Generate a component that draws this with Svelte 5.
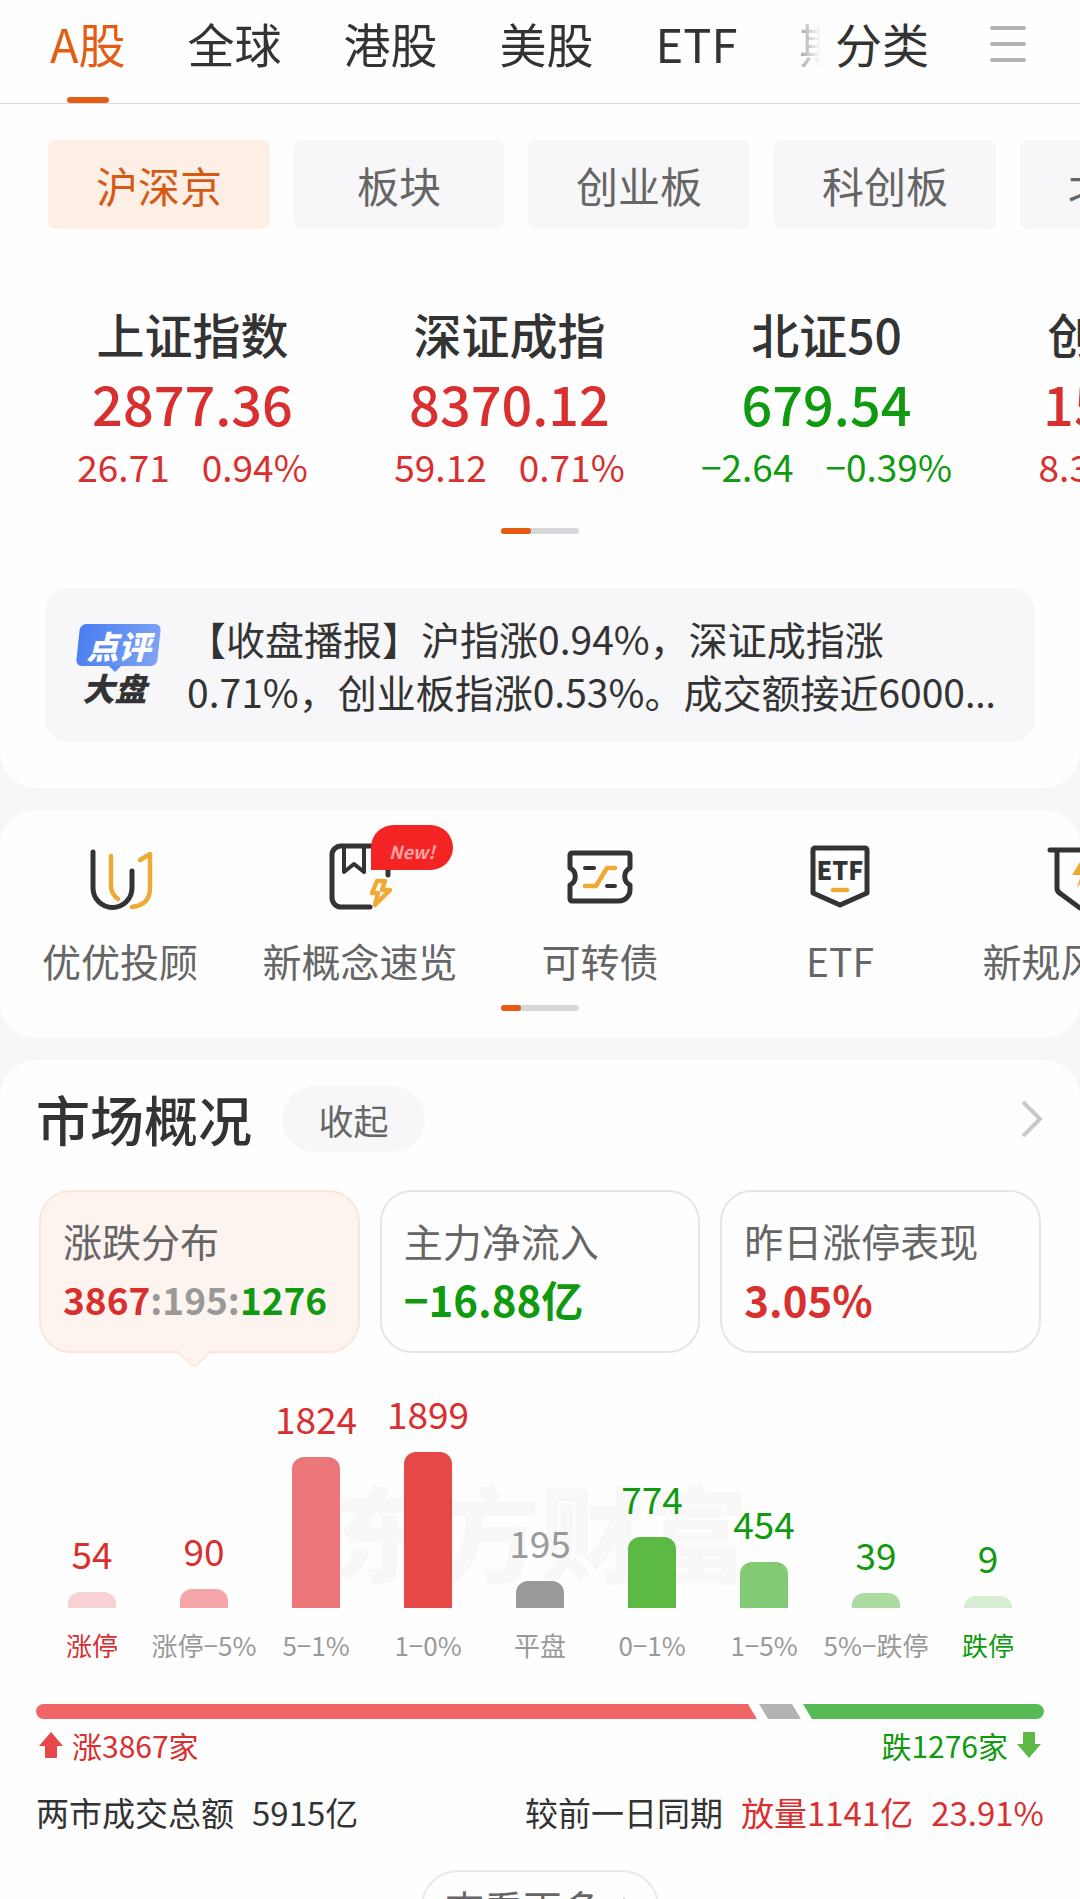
<script>
	const tabs = ['A股', '全球', '港股', '美股', 'ETF', '期货'];
	const boards = ['沪深京', '板块', '创业板', '科创板', '北交所'];

	const indices = [
		{ name: '上证指数', value: '2877.36', change: '26.71', percent: '0.94%', dir: 'up' },
		{ name: '深证成指', value: '8370.12', change: '59.12', percent: '0.71%', dir: 'up' },
		{ name: '北证50', value: '679.54', change: '−2.64', percent: '−0.39%', dir: 'down' },
		{ name: '创业板指', value: '1576.82', change: '8.32', percent: '0.53%', dir: 'up' }
	];

	const shortcuts = [
		{ icon: 'advisor', label: '优优投顾' },
		{ icon: 'concept', label: '新概念速览', badge: 'New!' },
		{ icon: 'bond', label: '可转债' },
		{ icon: 'etf', label: 'ETF' },
		{ icon: 'risk', label: '新规风险股' }
	];

	// height is the drawn bar height in px
	const bars = [
		{ label: '涨停', count: 54, height: 16, color: '#f9d1d3', tone: 'up', strong: true },
		{ label: '涨停−5%', count: 90, height: 19, color: '#f4a5a7', tone: 'up' },
		{ label: '5−1%', count: 1824, height: 151, color: '#ec7779', tone: 'up' },
		{ label: '1−0%', count: 1899, height: 156, color: '#e64747', tone: 'up' },
		{ label: '平盘', count: 195, height: 27, color: '#999999', tone: 'flat' },
		{ label: '0−1%', count: 774, height: 71, color: '#5cb944', tone: 'down' },
		{ label: '1−5%', count: 454, height: 46, color: '#82cb74', tone: 'down' },
		{ label: '5%−跌停', count: 39, height: 15, color: '#addca2', tone: 'down' },
		{ label: '跌停', count: 9, height: 12, color: '#d6eed1', tone: 'down', strong: true }
	];

	let activeTab = $state(0);
	let activeBoard = $state(0);
	let activeCard = $state(0);
</script>

<div class="app">
	<section class="panel top">
		<header>
			<nav class="tabs">
				{#each tabs as tab, i (tab)}
					<button class:active={i === activeTab} onclick={() => (activeTab = i)}>{tab}</button>
				{/each}
			</nav>
			<button class="sort">分类</button>
			<button class="menu" aria-label="菜单">
				<svg width="36" height="36" viewBox="0 0 36 36">
					<path d="M2 2h32M2 18h32M2 34h32" stroke="#b3b3b3" stroke-width="4" stroke-linecap="round" />
				</svg>
			</button>
		</header>

		<div class="boards">
			{#each boards as board, i (board)}
				<button class:active={i === activeBoard} onclick={() => (activeBoard = i)}>{board}</button>
			{/each}
		</div>

		<div class="indices">
			{#each indices as item (item.name)}
				<article class={item.dir}>
					<h3>{item.name}</h3>
					<strong>{item.value}</strong>
					<p><span>{item.change}</span><span>{item.percent}</span></p>
				</article>
			{/each}
		</div>
		<div class="pager"><i class="wide"></i></div>

		<a class="news" href="#news">
			<span class="logo">
				<b class="bubble">点评</b>
				<b class="word">大盘</b>
			</span>
			<span class="headline">
				【收盘播报】沪指涨0.94%，深证成指涨0.71%，创业板指涨0.53%。成交额接近6000<span class="dots">…</span>
			</span>
		</a>
	</section>

	<section class="panel entries">
		<div class="shortcuts">
			{#each shortcuts as item (item.icon)}
				<a href="#{item.icon}">
					<span class="icon">
						<svg width="80" height="72" viewBox="0 0 80 72">
							{#if item.icon === 'advisor'}
								<path class="gold" d="M31 16V46q0 8 7 13" />
								<path class="gold" d="M60 20L70 14V48q0 17-18 19" />
								<path class="ink" d="M13 12V48a19.500 19.500 0 0 0 39 0V31" />
							{:else if item.icon === 'concept'}
								<path class="ink" d="M50 67H21a9 9 0 0 1-9-9V15a9 9 0 0 1 9-9h38a9 9 0 0 1 9 9v20" />
								<path class="ink thin" d="M24 7v25l10-8 10 8V7" />
								<path class="gold" d="M57 41h8l-3 9h8L55 65l3-12h-6z" />
							{:else if item.icon === 'bond'}
								<path
									class="ink"
									d="M12 13h56a2 2 0 0 1 2 2v13a9.500 9.500 0 0 0 0 17v5a11 11 0 0 1-11 11H12a2 2 0 0 1-2-2V45a9.500 9.500 0 0 0 0-17V15a2 2 0 0 1 2-2z"
								/>
								<path class="ink thin" d="M25 28h9M47 46h8" />
								<path class="gold" d="M25 46h11l11-18h8" />
							{:else if item.icon === 'etf'}
								<path class="ink" d="M15 8h50a2 2 0 0 1 2 2v43L40 65 13 53V10a2 2 0 0 1 2-2z" />
								<text x="40" y="40" text-anchor="middle">ETF</text>
								<path class="gold" d="M33 50h14" />
							{:else}
								<path class="ink" d="M10 10h60M17 10v38q0 4 4 6l19 14 19-14q4-2 4-6V10" />
								<path class="spark" d="M45 14L32 35h9l-4 13 14-19h-9z" />
							{/if}
						</svg>
						{#if item.badge}<em>{item.badge}</em>{/if}
					</span>
					<span class="label">{item.label}</span>
				</a>
			{/each}
		</div>
		<div class="pager"><i></i></div>
	</section>

	<section class="panel market">
		<div class="title">
			<h2>市场概况</h2>
			<button>收起</button>
			<a href="#market" aria-label="市场概况">
				<svg width="24" height="38" viewBox="0 0 24 38">
					<path d="M3 2l17 17L3 36" fill="none" stroke="#c8c8c8" stroke-width="4" />
				</svg>
			</a>
		</div>

		<div class="cards">
			<button class:active={activeCard === 0} onclick={() => (activeCard = 0)}>
				<span>涨跌分布</span>
				<b class="ratio"><i class="up">3867</i>:195:<i class="down">1276</i></b>
			</button>
			<button class:active={activeCard === 1} onclick={() => (activeCard = 1)}>
				<span>主力净流入</span>
				<b class="down">−16.88亿</b>
			</button>
			<button class:active={activeCard === 2} onclick={() => (activeCard = 2)}>
				<span>昨日涨停表现</span>
				<b class="up">3.05%</b>
			</button>
		</div>

		<div class="chart">
			<div class="watermark">东方财富</div>
			{#each bars as bar (bar.label)}
				<div class="column">
					<span class="count {bar.tone}">{bar.count}</span>
					<div class="bar" style="height: {bar.height}px; background: {bar.color}"></div>
					<span class="range {bar.strong ? bar.tone : 'flat'}">{bar.label}</span>
				</div>
			{/each}
		</div>

		<div class="split">
			<div class="rise"></div>
			<div class="even"></div>
			<div class="fall"></div>
		</div>
		<div class="row sides">
			<span class="up">
				<svg width="26" height="28" viewBox="0 0 26 28">
					<path d="M13 1L25 15H19V26a1 1 0 0 1-1 1H8a1 1 0 0 1-1-1V15H1z" fill="#e64747" />
				</svg>
				涨3867家
			</span>
			<span class="down">
				跌1276家
				<svg width="26" height="28" viewBox="0 0 26 28">
					<path d="M13 27L25 13H19V2a1 1 0 0 0-1-1H8a1 1 0 0 0-1 1V13H1z" fill="#5cb944" />
				</svg>
			</span>
		</div>
		<div class="row totals">
			<p><span>两市成交总额</span><span>5915亿</span></p>
			<p>
				<span>较前一日同期</span><span class="up">放量1141亿</span><span class="up">23.91%</span>
			</p>
		</div>

		<button class="more">
			查看更多
			<svg width="14" height="20" viewBox="0 0 14 20">
				<path d="M2 2l8 8-8 8" fill="none" stroke="#999" stroke-width="3" />
			</svg>
		</button>
	</section>
</div>

<style>
	:global(body) {
		margin: 0;
		background: #f5f7f9;
	}

	.app {
		height: 100vh;
		overflow: hidden auto;
		scrollbar-width: none;
		display: flex;
		flex-direction: column;
		gap: 22px;
		background: #f5f7f9;
		color: #333;
		font-family: 'Noto Sans CJK SC', 'Noto Sans', sans-serif;
	}

	button {
		margin: 0;
		padding: 0;
		border: 0;
		background: none;
		color: inherit;
		font: inherit;
		white-space: nowrap;
		cursor: pointer;
	}

	a {
		color: inherit;
		text-decoration: none;
	}

	h2,
	h3,
	p {
		margin: 0;
		font-weight: 500;
	}

	.up {
		color: #d92f2f;
	}

	.down {
		color: #109a10;
	}

	.flat {
		color: #999;
	}

	.panel {
		flex: none;
		overflow: hidden;
		background: #fefefe;
		border-radius: 36px;
	}

	.top {
		padding-bottom: 46px;
		border-radius: 0 0 36px 36px;
	}

	header {
		display: flex;
		height: 103px;
		padding-right: 54px;
		border-bottom: 1px solid #ddd;
		font-size: 47px;
		line-height: 86px;
	}

	.tabs {
		flex: 1;
		min-width: 0;
		overflow: hidden;
		display: flex;
		gap: 62px;
		padding-left: 50px;
		mask-image: linear-gradient(to left, transparent 0, transparent 10px, #000 60px);
	}

	.tabs button {
		flex: none;
		display: flex;
		flex-direction: column;
		align-items: center;
	}

	.tabs .active {
		color: #e35d14;
	}

	.tabs .active::after {
		content: '';
		width: 42px;
		height: 6px;
		margin-top: 11px;
		border-radius: 3px;
		background: #e35d14;
	}

	.sort {
		align-self: flex-start;
		margin-left: 4px;
	}

	.menu {
		align-self: flex-start;
		display: flex;
		margin: 26px 0 0 61px;
	}

	.boards {
		display: flex;
		gap: 24px;
		margin-top: 36px;
		padding-left: 48px;
	}

	.boards button {
		flex: none;
		box-sizing: border-box;
		min-width: 210px;
		height: 89px;
		padding: 0 48px;
		border-radius: 8px;
		background: #f7f7f9;
		color: #666;
		font-size: 42px;
	}

	.boards .active {
		background: #fdeee6;
		color: #d65a14;
	}

	.indices {
		display: flex;
		margin-top: 72px;
		padding-left: 34px;
	}

	.indices article {
		flex: none;
		width: 317px;
		text-align: center;
	}

	.indices h3 {
		color: #333;
		font-size: 48px;
		line-height: 64px;
	}

	.indices strong {
		display: block;
		font-size: 54px;
		font-weight: 500;
		line-height: 76px;
	}

	.indices p {
		display: flex;
		justify-content: center;
		gap: 32px;
		font-size: 37px;
		font-weight: 400;
		line-height: 50px;
	}

	.pager {
		width: 78px;
		height: 6px;
		margin: 37px auto 0;
		border-radius: 3px;
		background: #d6d7db;
	}

	.pager i {
		display: block;
		width: 20px;
		height: 6px;
		border-radius: 3px;
		background: #e8590f;
	}

	.pager .wide {
		width: 30px;
	}

	.news {
		display: flex;
		align-items: center;
		gap: 26px;
		margin: 54px 45px 0;
		padding: 24px 30px 23px 31px;
		border-radius: 24px;
		background: #f7f7f9;
	}

	.logo {
		flex: none;
		width: 85px;
		display: flex;
		flex-direction: column;
		font-size: 32px;
		font-style: italic;
		font-weight: 900;
		text-align: center;
	}

	.bubble {
		position: relative;
		z-index: 0;
		color: #fff;
		line-height: 42px;
	}

	.bubble::before {
		content: '';
		position: absolute;
		z-index: -1;
		inset: 0 2px;
		border-radius: 6px;
		background: linear-gradient(100deg, #4a7df0, #7fa4f6);
		transform: skewX(-6deg);
	}

	.bubble::after {
		content: '';
		position: absolute;
		z-index: -2;
		left: 34px;
		bottom: -4px;
		width: 10px;
		height: 10px;
		background: #5c8af2;
		transform: rotate(45deg);
	}

	.word {
		padding-right: 8px;
		line-height: 42px;
	}

	.headline {
		flex: 1;
		font-size: 39px;
		line-height: 53px;
	}

	.dots {
		font-family: 'Noto Sans', sans-serif;
	}

	.shortcuts {
		display: flex;
		padding-top: 30px;
	}

	.shortcuts a {
		flex: none;
		width: 240px;
		display: flex;
		flex-direction: column;
		align-items: center;
		gap: 23px;
	}

	.icon {
		position: relative;
		display: flex;
	}

	.icon path {
		fill: none;
		stroke-width: 5;
		stroke-linecap: round;
		stroke-linejoin: round;
	}

	.icon .ink {
		stroke: #333;
	}

	.icon .gold {
		stroke: #eeaa35;
		stroke-width: 4.5;
	}

	.icon .thin {
		stroke-width: 4;
	}

	.icon .spark {
		fill: #f0a82c;
	}

	.icon text {
		fill: #333;
		font-size: 25px;
		font-weight: 900;
	}

	.icon em {
		position: absolute;
		left: 51px;
		top: -15px;
		width: 82px;
		height: 45px;
		border-radius: 23px 23px 23px 0;
		background: #f32424;
		color: #f9a3a3;
		font-size: 18px;
		font-weight: 700;
		line-height: 52px;
		text-align: center;
	}

	.label {
		color: #666;
		font-size: 39px;
		line-height: 50px;
		white-space: nowrap;
	}

	.entries {
		padding-bottom: 27px;
	}

	.entries .pager {
		margin-top: 20px;
	}

	.market {
		padding: 26px 36px 40px;
		border-radius: 36px 36px 0 0;
	}

	.title {
		display: flex;
		align-items: center;
	}

	.title h2 {
		font-size: 54px;
		line-height: 66px;
	}

	.title button {
		width: 143px;
		height: 66px;
		margin-left: 30px;
		border-radius: 33px;
		background: #f7f7f9;
		color: #666;
		font-size: 35px;
	}

	.title a {
		display: flex;
		margin-left: auto;
	}

	.cards {
		display: grid;
		grid-template-columns: repeat(3, 1fr);
		gap: 20px;
		margin: 38px 3px 0;
	}

	.cards button {
		position: relative;
		display: flex;
		flex-direction: column;
		align-items: flex-start;
		padding: 21px 22px 20px;
		border: 2px solid #e6e6e6;
		border-radius: 32px;
	}

	.cards .active {
		border-color: #fce6dc;
		background: #fef4ef;
	}

	.cards .active::after {
		content: '';
		position: absolute;
		left: 50%;
		bottom: -13px;
		width: 24px;
		height: 24px;
		margin-left: -18px;
		border: solid #fce6dc;
		border-width: 0 2px 2px 0;
		border-radius: 0 0 6px 0;
		background: linear-gradient(135deg, transparent 50%, #fef4ef 50%);
		transform: rotate(45deg);
	}

	.cards span {
		color: #666;
		font-size: 39px;
		line-height: 54px;
	}

	.cards b {
		font-size: 42px;
		line-height: 64px;
	}

	.cards .ratio {
		color: #999;
		font-size: 37px;
	}

	.ratio i {
		font-style: normal;
	}

	.chart {
		position: relative;
		z-index: 0;
		display: grid;
		grid-template-columns: repeat(9, 1fr);
		align-items: end;
		height: 276px;
		margin-top: 35px;
	}

	.watermark {
		position: absolute;
		z-index: -1;
		inset: 82px 0 auto;
		color: #f8f8f8;
		font-size: 104px;
		font-weight: 900;
		line-height: 120px;
		text-align: center;
	}

	.column {
		display: flex;
		flex-direction: column;
		align-items: center;
	}

	.count {
		margin-bottom: 17px;
		font-size: 37px;
		line-height: 44px;
	}

	.bar {
		width: 48px;
		border-radius: 12px 12px 0 0;
	}

	.range {
		margin-top: 18px;
		font-size: 26px;
		line-height: 38px;
		white-space: nowrap;
	}

	.split {
		display: flex;
		gap: 2px;
		height: 15px;
		margin-top: 40px;
		border-radius: 8px;
		overflow: hidden;
	}

	.rise {
		flex: 721;
		background: #f06565;
		clip-path: polygon(0 0, calc(100% - 9px) 0, 100% 100%, 0 100%);
	}

	.even {
		flex: 42;
		background: #b3b3b3;
		clip-path: polygon(0 0, calc(100% - 9px) 0, 100% 100%, 9px 100%);
	}

	.fall {
		flex: 241;
		background: #57bb55;
		clip-path: polygon(0 0, 100% 0, 100% 100%, 9px 100%);
	}

	.row {
		display: flex;
		justify-content: space-between;
	}

	.sides {
		margin-top: 6px;
		padding: 0 2px;
		font-size: 30px;
		line-height: 40px;
	}

	.sides span {
		display: flex;
		align-items: center;
		gap: 8px;
	}

	.totals {
		margin-top: 25px;
		font-size: 33px;
		line-height: 44px;
	}

	.totals p {
		display: flex;
		gap: 18px;
		font-weight: 400;
	}

	.more {
		display: flex;
		align-items: center;
		justify-content: center;
		gap: 20px;
		width: 238px;
		height: 74px;
		margin: 36px auto 0;
		border: 2px solid #e9e9e9;
		border-radius: 37px;
		color: #666;
		font-size: 39px;
	}
</style>
